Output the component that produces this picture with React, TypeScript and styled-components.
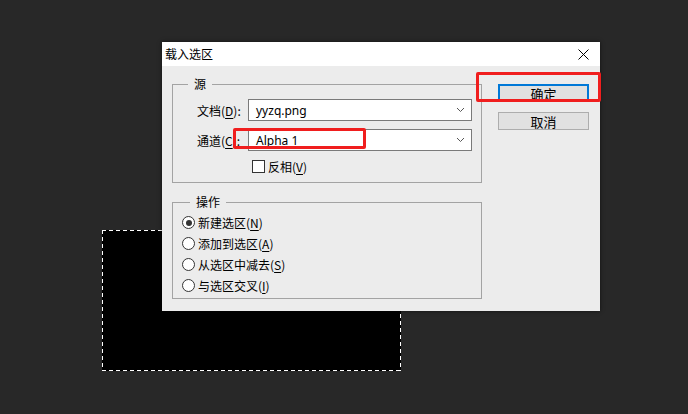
import React from 'react';
import styled, { createGlobalStyle } from 'styled-components';

const GlobalStyle = createGlobalStyle`
  html, body {
    margin: 0;
    padding: 0;
    background: #282828;
  }
  body {
    width: 688px;
    height: 414px;
    overflow: hidden;
    font-family: "Noto Sans", "Noto Sans CJK SC", sans-serif;
    font-size: 12px;
    color: #000;
  }
`;

const Workspace = styled.div`
  position: relative;
  width: 688px;
  height: 414px;
  background: #282828;
`;

// the black layer with the marching-ants selection on the canvas
const Selection = styled.div`
  position: absolute;
  left: 102px;
  top: 230px;
  width: 299px;
  height: 141px;
  background-color: #000;
  background-image:
    repeating-linear-gradient(90deg, #fff 0 4px, transparent 4px 7px),
    repeating-linear-gradient(90deg, #fff 0 4px, transparent 4px 7px),
    repeating-linear-gradient(180deg, #fff 0 4px, transparent 4px 7px),
    repeating-linear-gradient(180deg, #fff 0 4px, transparent 4px 7px);
  background-size: 100% 1px, 100% 1px, 1px 100%, 1px 100%;
  background-position: 0 0, 0 100%, 0 0, 100% 0;
  background-repeat: no-repeat;
`;

const Dialog = styled.div`
  position: absolute;
  left: 162px;
  top: 42px;
  width: 438px;
  height: 269px;
  background: #ececec;
  display: flex;
  flex-direction: column;
  box-shadow: 0 0 4px rgba(0, 0, 0, 0.6);
`;

const TitleBar = styled.div`
  height: 24px;
  background: #fff;
  display: flex;
  align-items: center;
  justify-content: space-between;
  padding-left: 3px;
  line-height: 24px;
`;

const Title = styled.span`
  font-size: 12px;
  font-family: "Noto Sans CJK SC", sans-serif;
`;

const CloseButton = styled.div`
  width: 32px;
  height: 24px;
  display: flex;
  align-items: center;
  justify-content: center;
  margin-right: 1px;
`;

const Body = styled.div`
  flex: 1;
  display: flex;
  padding: 18px 11px 12px 10px;
`;

const LeftCol = styled.div`
  width: 310px;
  display: flex;
  flex-direction: column;
  gap: 19px;
`;

const Group = styled.div<{ $h: number }>`
  position: relative;
  box-sizing: border-box;
  height: ${(p) => p.$h}px;
  border: 1px solid #a3a3a3;
`;

const Legend = styled.span<{ $left: number }>`
  position: absolute;
  top: -9px;
  left: ${(p) => p.$left}px;
  padding: 0 6px;
  background: #ececec;
  line-height: 16px;
  font-family: "Noto Sans CJK SC", sans-serif;
`;

const SourceBody = styled.div`
  padding: 14px 9px 0 24px;
  display: flex;
  flex-direction: column;
  gap: 8px;
`;

const FieldRow = styled.div`
  display: flex;
  align-items: center;
  height: 22px;
`;

const Label = styled.span`
  width: 51px;
  white-space: nowrap;
  font-family: "Noto Sans CJK SC", sans-serif;
`;

const U = styled.span`
  text-decoration: underline;
  text-underline-offset: 2px;
`;

const Combo = styled.div`
  box-sizing: border-box;
  width: 224px;
  height: 22px;
  background: #fff;
  border: 1px solid #7a7a7a;
  display: flex;
  align-items: center;
  justify-content: space-between;
  padding: 0 6px 0 7px;
  font-family: "Noto Sans", sans-serif;
`;

const CheckRow = styled.div`
  display: flex;
  align-items: center;
  height: 13px;
  margin: 1px 0 0 55px;
  gap: 3px;
  font-family: "Noto Sans CJK SC", sans-serif;
`;

const CheckBox = styled.span`
  box-sizing: border-box;
  width: 13px;
  height: 13px;
  background: #fff;
  border: 1px solid #333;
`;

const RadioList = styled.div`
  padding: 9px 0 0 9px;
  display: flex;
  flex-direction: column;
`;

const RadioRow = styled.div`
  height: 21px;
  display: flex;
  align-items: center;
  gap: 3px;
  font-family: "Noto Sans CJK SC", sans-serif;
`;

const Radio = styled.span<{ $on?: boolean }>`
  box-sizing: border-box;
  width: 13px;
  height: 13px;
  border-radius: 50%;
  background: #fff;
  border: 1px solid #333;
  display: flex;
  align-items: center;
  justify-content: center;
  &::after {
    content: '';
    width: 6px;
    height: 6px;
    border-radius: 50%;
    background: ${(p) => (p.$on ? '#333' : 'transparent')};
  }
`;

const ButtonCol = styled.div`
  margin-left: 16px;
  display: flex;
  flex-direction: column;
  gap: 10px;
`;

const Button = styled.div<{ $primary?: boolean }>`
  box-sizing: border-box;
  width: 91px;
  height: 18px;
  background: #e1e1e1;
  border: ${(p) => (p.$primary ? '2px solid #0078d7' : '1px solid #adadad')};
  display: flex;
  align-items: center;
  justify-content: center;
  font-family: "Noto Sans CJK SC", sans-serif;
  font-size: 13px;
  line-height: 1;
`;

// red annotation frames drawn over the dialog
const Mark = styled.div`
  position: absolute;
  box-sizing: border-box;
  border: 3px solid #f01e1e;
  border-radius: 2px;
`;

const Chevron = () => (
  <svg width="9" height="6" viewBox="0 0 9 6">
    <path d="M1 1 L4.5 4.5 L8 1" fill="none" stroke="#555" strokeWidth="1" />
  </svg>
);

const CloseIcon = () => (
  <svg width="11" height="11" viewBox="0 0 11 11">
    <path d="M0.5 0.5 L10.5 10.5 M10.5 0.5 L0.5 10.5" stroke="#000" strokeWidth="1" />
  </svg>
);

const radios = [
  { text: '新建选区', key: 'N', on: true },
  { text: '添加到选区', key: 'A' },
  { text: '从选区中减去', key: 'S' },
  { text: '与选区交叉', key: 'I' },
];

const App = () => {
  return (
    <Workspace>
      <GlobalStyle />
      <Selection />
      <Dialog>
        <TitleBar>
          <Title>载入选区</Title>
          <CloseButton>
            <CloseIcon />
          </CloseButton>
        </TitleBar>
        <Body>
          <LeftCol>
            <Group $h={99}>
              <Legend $left={15}>源</Legend>
              <SourceBody>
                <FieldRow>
                  <Label>
                    文档(<U>D</U>):
                  </Label>
                  <Combo>
                    <span>yyzq.png</span>
                    <Chevron />
                  </Combo>
                </FieldRow>
                <FieldRow>
                  <Label>
                    通道(<U>C</U>):
                  </Label>
                  <Combo>
                    <span>Alpha 1</span>
                    <Chevron />
                  </Combo>
                </FieldRow>
                <CheckRow>
                  <CheckBox />
                  <span>
                    反相(<U>V</U>)
                  </span>
                </CheckRow>
              </SourceBody>
            </Group>
            <Group $h={97}>
              <Legend $left={17}>操作</Legend>
              <RadioList>
                {radios.map((r) => (
                  <RadioRow key={r.key}>
                    <Radio $on={r.on} />
                    <span>
                      {r.text}(<U>{r.key}</U>)
                    </span>
                  </RadioRow>
                ))}
              </RadioList>
            </Group>
          </LeftCol>
          <ButtonCol>
            <Button $primary>确定</Button>
            <Button>取消</Button>
          </ButtonCol>
        </Body>
        <Mark style={{ left: 314, top: 30, width: 125, height: 30 }} />
        <Mark style={{ left: 71, top: 86, width: 133, height: 21 }} />
      </Dialog>
    </Workspace>
  );
};

export default App;
